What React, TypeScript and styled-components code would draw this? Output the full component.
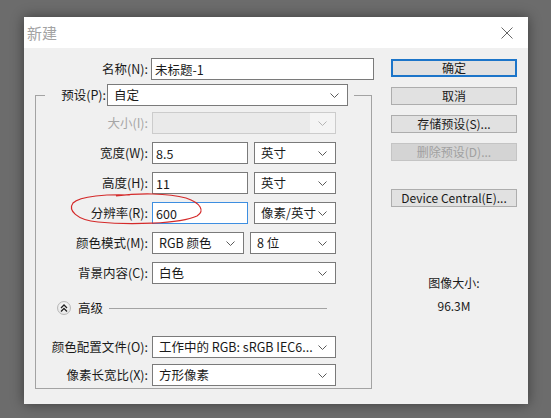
import React from 'react';
import styled, { createGlobalStyle } from 'styled-components';

const GlobalStyle = createGlobalStyle`
  html, body {
    margin: 0;
    padding: 0;
  }
  body {
    width: 551px;
    height: 418px;
    overflow: hidden;
    background: #6c6c6c;
    font-family: "Noto Sans CJK SC", "Noto Sans", sans-serif;
    color: #000;
  }
`;

const Desktop = styled.div`
  position: relative;
  width: 551px;
  height: 418px;
  box-sizing: border-box;
  padding: 17px 0 0 24px;
`;

const Dialog = styled.div`
  width: 504px;
  height: 387px;
  background: #f0f0f0;
  box-shadow: 0 0 12px rgba(0, 0, 0, 0.45);
  display: flex;
  flex-direction: column;
`;

const TitleBar = styled.div`
  height: 31px;
  flex: none;
  background: #fff;
  display: flex;
  align-items: center;
  justify-content: space-between;
  padding: 0 15px 0 3px;
  font-size: 15px;
  color: #a3a3a3;
`;

const CloseButton = styled.div`
  width: 12px;
  height: 12px;
  display: flex;
`;

const Body = styled.div`
  flex: 1;
  display: flex;
  padding-top: 10px;
`;

const LeftPane = styled.div`
  width: 356px;
  box-sizing: border-box;
  padding-left: 11px;
  display: flex;
  flex-direction: column;
`;

const RightPane = styled.div`
  width: 126px;
  margin-left: 11px;
  padding-top: 1px;
  display: flex;
  flex-direction: column;
`;

const Row = styled.div<{ labelWidth: number; gap: number }>`
  display: grid;
  grid-template-columns: ${p => p.labelWidth}px auto;
  column-gap: ${p => p.gap}px;
  align-items: center;
  height: 22px;
`;

const Label = styled.span<{ disabled?: boolean; width?: number }>`
  ${p => (p.width ? `width: ${p.width}px;` : '')}
  text-align: right;
  font-size: 12.5px;
  line-height: 16px;
  white-space: nowrap;
  color: ${p => (p.disabled ? '#a6a6a6' : '#1a1a1a')};
`;

const Fields = styled.div`
  display: flex;
  align-items: center;
  gap: 6px;
`;

const TextBox = styled.input<{ width: number; focused?: boolean }>`
  width: ${p => p.width}px;
  height: 22px;
  box-sizing: border-box;
  margin: 0;
  padding: 0 3px;
  border: 1px solid ${p => (p.focused ? '#3d8ee0' : '#7a7a7a')};
  background: #fff;
  font: 12.5px/16px "Noto Sans CJK SC", "Noto Sans", sans-serif;
  color: #1a1a1a;
  outline: none;
`;

const SelectBox = styled.div<{ width: number; disabled?: boolean }>`
  width: ${p => p.width}px;
  height: 22px;
  box-sizing: border-box;
  display: flex;
  align-items: center;
  justify-content: space-between;
  padding: 0 8px 0 6px;
  border: 1px solid ${p => (p.disabled ? '#cccccc' : '#7a7a7a')};
  background: ${p => (p.disabled ? 'linear-gradient(to right, #eaeaea 0 86%, #f4f4f4 86%)' : '#fff')};
  font-size: 12.5px;
  line-height: 16px;
  white-space: nowrap;
  color: #1a1a1a;
`;

const Chevron = ({ light }: { light?: boolean }) => (
  <svg width="9" height="5" viewBox="0 0 9 5">
    <polyline points="0.5,0.5 4.5,4.5 8.5,0.5" fill="none" stroke={light ? '#b5b5b5' : '#5a5a5a'} strokeWidth="1" />
  </svg>
);

const Select = ({ width, value, disabled }: { width: number; value?: string; disabled?: boolean }) => (
  <SelectBox width={width} disabled={disabled}>
    <span>{value}</span>
    <Chevron light={disabled} />
  </SelectBox>
);

const Group = styled.fieldset`
  margin: 4px 0 0 0;
  padding: 6px 0 2px 0;
  width: 337px;
  min-width: 0;
  box-sizing: border-box;
  border: 1px solid #a3a3a3;
`;

const Legend = styled.legend`
  margin-left: 9px;
  padding: 0 6px 0 0;
  display: flex;
  align-items: center;
  gap: 1px;
`;

const Stack = styled.div<{ gap: number }>`
  display: flex;
  flex-direction: column;
  gap: ${p => p.gap}px;
`;

const AdvancedRow = styled.div`
  display: flex;
  align-items: center;
  gap: 7px;
  height: 16px;
  margin: 16px 0 20px 21px;
  padding-right: 44px;
  font-size: 12.5px;
  line-height: 16px;
  color: #1a1a1a;
`;

const ToggleIcon = styled.div`
  width: 14px;
  height: 14px;
  box-sizing: border-box;
  border-radius: 50%;
  border: 1px solid #b8b8b8;
  background: radial-gradient(circle at 50% 40%, #ffffff, #dedede);
  display: flex;
  align-items: center;
  justify-content: center;
`;

const Rule = styled.div`
  flex: 1;
  height: 1px;
  background: #a3a3a3;
  margin-left: -1px;
`;

const Button = styled.div<{ primary?: boolean; disabled?: boolean; spaced?: boolean }>`
  height: 18px;
  box-sizing: border-box;
  display: flex;
  align-items: center;
  justify-content: center;
  margin-top: ${p => (p.spaced ? '28px' : '0')};
  background: ${p => (p.disabled ? '#d4d4d4' : '#e1e1e1')};
  border: ${p => (p.primary ? '2px solid #1c75c9' : `1px solid ${p.disabled ? '#c4c4c4' : '#adadad'}`)};
  font-size: 12px;
  line-height: 16px;
  color: ${p => (p.disabled ? '#a0a0a0' : '#1a1a1a')};
  white-space: nowrap;
`;

const ButtonStack = styled.div`
  display: flex;
  flex-direction: column;
  gap: 10px;
`;

const ImageSize = styled.div`
  margin-top: 68px;
  display: flex;
  flex-direction: column;
  align-items: center;
  gap: 7px;
  font-size: 12px;
  line-height: 16px;
  color: #1a1a1a;
`;

const Annotation = styled.svg`
  position: absolute;
  left: 68px;
  top: 190px;
  pointer-events: none;
`;

export default function App() {
  return (
    <>
      <GlobalStyle />
      <Desktop>
        <Dialog>
          <TitleBar>
            <span>新建</span>
            <CloseButton>
              <svg width="12" height="12" viewBox="0 0 12 12">
                <path d="M0.5 0.5 L11.5 11.5 M11.5 0.5 L0.5 11.5" stroke="#666" strokeWidth="1" />
              </svg>
            </CloseButton>
          </TitleBar>
          <Body>
            <LeftPane>
              <Row labelWidth={113} gap={3}>
                <Label>名称(N):</Label>
                <TextBox width={223} defaultValue="未标题-1" readOnly />
              </Row>
              <Group>
                <Legend>
                  <Label width={61}>预设(P):</Label>
                  <Select width={241} value="自定" />
                </Legend>
                <Stack gap={8}>
                  <Row labelWidth={112} gap={4}>
                    <Label disabled>大小(I):</Label>
                    <Select width={184} disabled />
                  </Row>
                  <Row labelWidth={112} gap={4}>
                    <Label>宽度(W):</Label>
                    <Fields>
                      <TextBox width={96} defaultValue="8.5" readOnly />
                      <Select width={82} value="英寸" />
                    </Fields>
                  </Row>
                  <Row labelWidth={112} gap={4}>
                    <Label>高度(H):</Label>
                    <Fields>
                      <TextBox width={96} defaultValue="11" readOnly />
                      <Select width={82} value="英寸" />
                    </Fields>
                  </Row>
                  <Row labelWidth={112} gap={4}>
                    <Label>分辨率(R):</Label>
                    <Fields>
                      <TextBox width={96} focused defaultValue="600" readOnly />
                      <Select width={82} value="像素/英寸" />
                    </Fields>
                  </Row>
                  <Row labelWidth={112} gap={4}>
                    <Label>颜色模式(M):</Label>
                    <Fields>
                      <Select width={92} value="RGB 颜色" />
                      <Select width={86} value="8 位" />
                    </Fields>
                  </Row>
                  <Row labelWidth={112} gap={4}>
                    <Label>背景内容(C):</Label>
                    <Select width={184} value="白色" />
                  </Row>
                </Stack>
                <AdvancedRow>
                  <ToggleIcon>
                    <svg width="8" height="8" viewBox="0 0 8 8">
                      <path d="M1 4 L4 1 L7 4 M1 7.5 L4 4.5 L7 7.5" fill="none" stroke="#222" strokeWidth="1.3" />
                    </svg>
                  </ToggleIcon>
                  <span>高级</span>
                  <Rule />
                </AdvancedRow>
                <Stack gap={6}>
                  <Row labelWidth={112} gap={4}>
                    <Label>颜色配置文件(O):</Label>
                    <Select width={184} value="工作中的 RGB: sRGB IEC6..." />
                  </Row>
                  <Row labelWidth={112} gap={4}>
                    <Label>像素长宽比(X):</Label>
                    <Select width={184} value="方形像素" />
                  </Row>
                </Stack>
              </Group>
            </LeftPane>
            <RightPane>
              <ButtonStack>
                <Button primary>确定</Button>
                <Button>取消</Button>
                <Button>存储预设(S)...</Button>
                <Button disabled>删除预设(D)...</Button>
              </ButtonStack>
              <Button spaced>Device Central(E)...</Button>
              <ImageSize>
                <span>图像大小:</span>
                <span>96.3M</span>
              </ImageSize>
            </RightPane>
          </Body>
        </Dialog>
        <Annotation width="136" height="38" viewBox="0 0 136 38">
          <path
            d="M62 5 C40 4 12 6 5 13 C0 20 8 30 30 32 C60 35 112 34 129 26 C137 21 133 13 118 8 C100 3 70 3 48 6"
            fill="none"
            stroke="#d42a2a"
            strokeWidth="1.2"
          />
        </Annotation>
      </Desktop>
    </>
  );
}
